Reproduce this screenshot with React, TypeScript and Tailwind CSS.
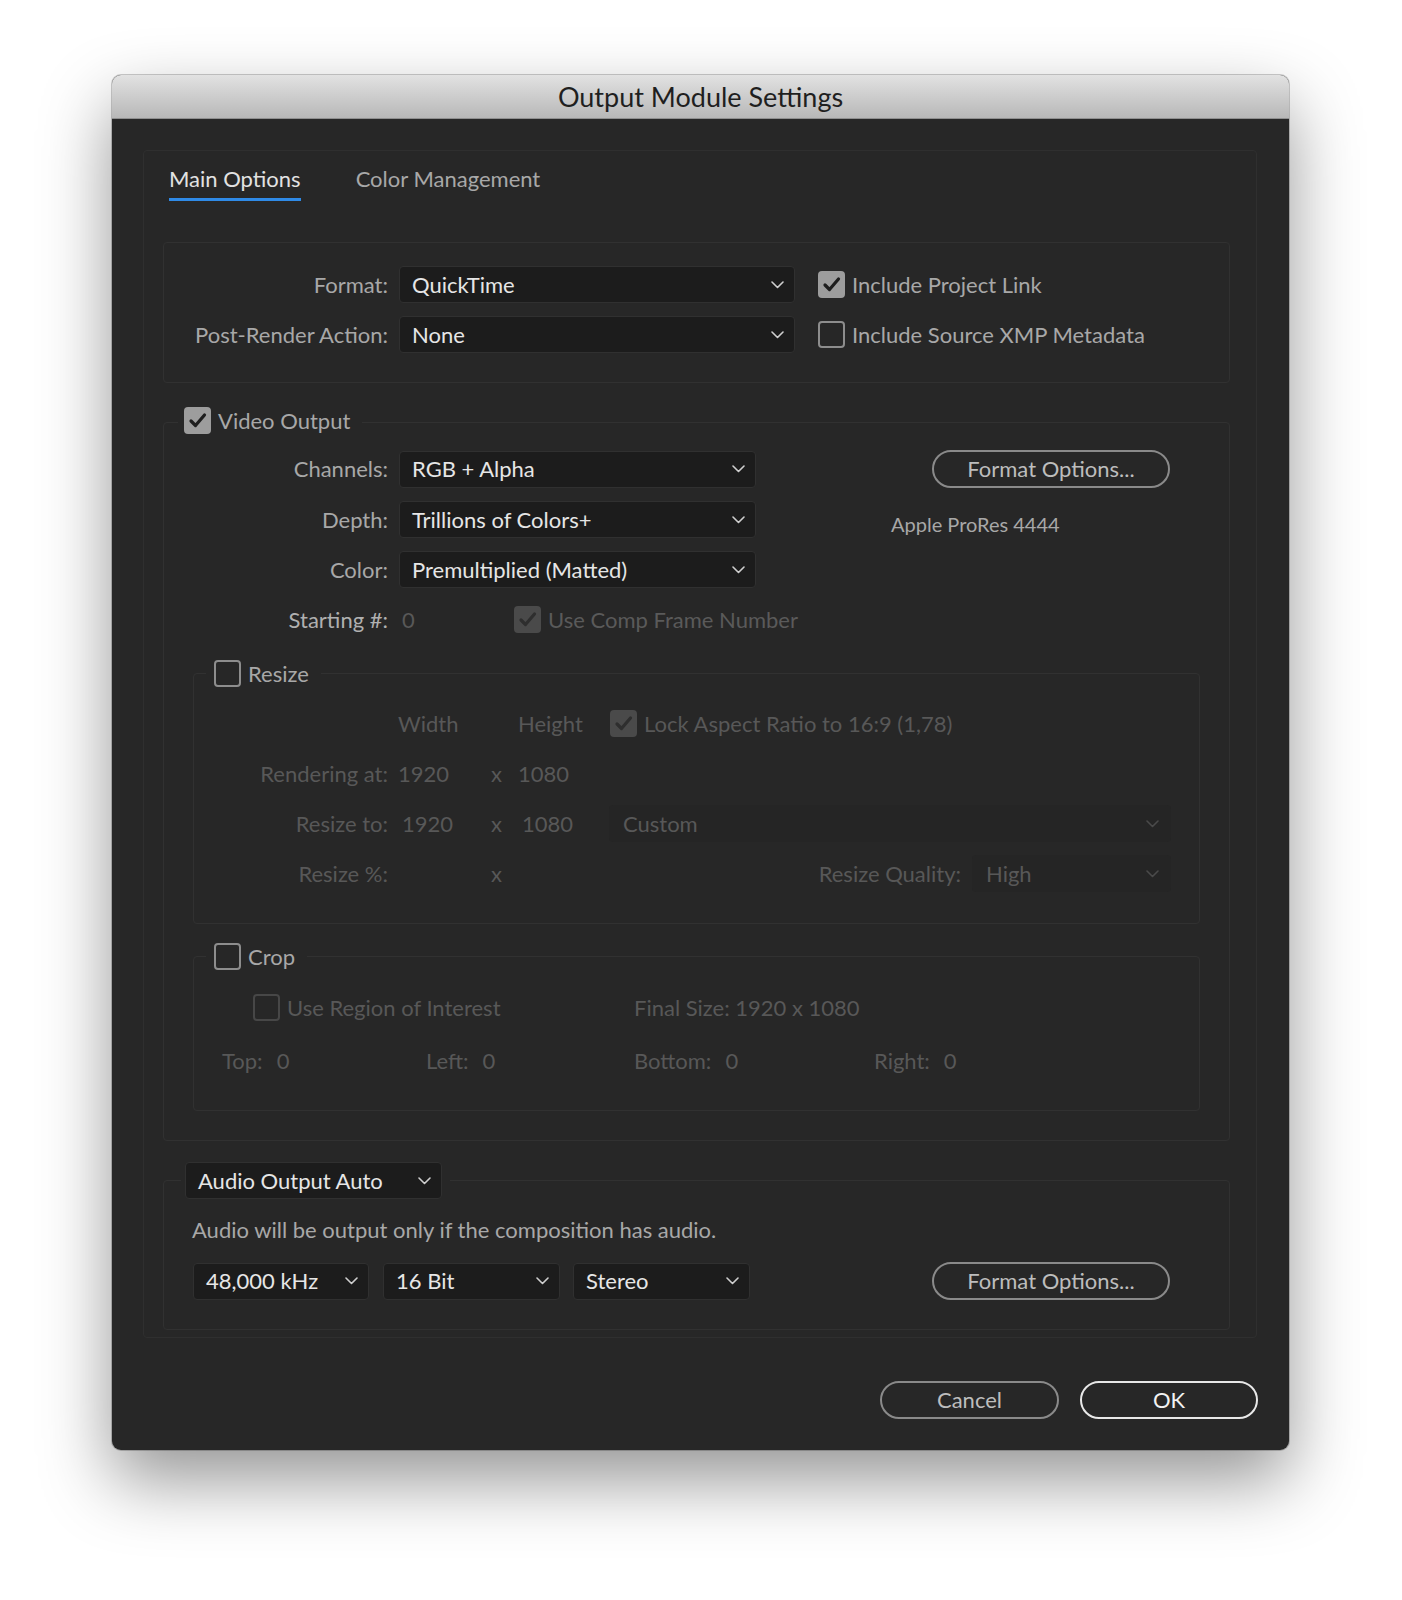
import React from "react";

const Chevron = ({ color = "#cfcfcf" }: { color?: string }) => (
  <svg width="13" height="8" viewBox="0 0 13 8" className="shrink-0">
    <path d="M1 1l5.5 5.5L12 1" fill="none" stroke={color} strokeWidth="1.6" strokeLinecap="round" strokeLinejoin="round" />
  </svg>
);

const Check = ({ color }: { color: string }) => (
  <svg width="27" height="27" viewBox="0 0 27 27">
    <path d="M7 14l4.5 4.5L20.5 8" fill="none" stroke={color} strokeWidth="3.2" strokeLinecap="round" strokeLinejoin="round" />
  </svg>
);

function Checkbox({ checked, disabled }: { checked?: boolean; disabled?: boolean }) {
  if (checked && !disabled)
    return (
      <div className="w-[27px] h-[27px] shrink-0 rounded-[4px] bg-[#9d9d9d] flex items-center justify-center">
        <Check color="#1e1e1e" />
      </div>
    );
  if (checked && disabled)
    return (
      <div className="w-[27px] h-[27px] shrink-0 rounded-[4px] bg-[#4a4a4a] flex items-center justify-center">
        <Check color="#2e2e2e" />
      </div>
    );
  if (disabled)
    return <div className="w-[27px] h-[27px] shrink-0 rounded-[4px] border-2 border-[#474747]" />;
  return <div className="w-[27px] h-[27px] shrink-0 rounded-[4px] border-2 border-[#8d8d8d]" />;
}

function Select({ value, w }: { value: string; w: string }) {
  return (
    <div className={`${w} h-[37px] shrink-0 rounded-[4px] bg-[#1c1c1c] border border-[#303030] flex items-center justify-between pl-[12px] pr-[10px] text-[#e6e6e6]`}>
      <span>{value}</span>
      <Chevron />
    </div>
  );
}

function DisabledSelect({ value, w }: { value: string; w: string }) {
  return (
    <div className={`${w} h-[37px] shrink-0 rounded-[4px] bg-[#252525] flex items-center justify-between pl-[14px] pr-[12px] text-[#585858]`}>
      <span>{value}</span>
      <Chevron color="#4a4a4a" />
    </div>
  );
}

function PillButton({ label, w, bright }: { label: string; w: string; bright?: boolean }) {
  return (
    <div
      className={`${w} h-[38px] shrink-0 rounded-full border-2 flex items-center justify-center ${
        bright ? "border-[#e8e8e8] text-[#f2f2f2]" : "border-[#8a8a8a] text-[#bdbdbd]"
      }`}
    >
      {label}
    </div>
  );
}

function VRow({ label, children }: { label: string; children: React.ReactNode }) {
  return (
    <div className="flex items-center h-[37px]">
      <div className="w-[224px] text-right text-[#a8a8a8] shrink-0">{label}</div>
      <div className="ml-[11px] flex items-center">{children}</div>
    </div>
  );
}

export default function App() {
  return (
    <div className="w-[1402px] h-[1600px] bg-white pt-[75px] pl-[112px] font-[Lato,sans-serif] text-[22px] leading-[28px]">
      <div className="w-[1177px] h-[1375px] rounded-[9px] bg-[#272727] shadow-[0_30px_70px_rgba(0,0,0,0.42),0_0_0_1px_rgba(0,0,0,0.2)] overflow-hidden flex flex-col">
        {/* Title bar */}
        <div className="h-[44px] shrink-0 bg-linear-to-b from-[#e2e2e2] to-[#b8b8b8] border-b border-[#8f8f8f] flex items-center justify-center text-[27px] text-[#1f1f1f]">
          Output Module Settings
        </div>

        <div className="flex-1 px-[31px] pt-[31px] flex flex-col">
          {/* Outer panel */}
          <div className="w-[1114px] h-[1188px] shrink-0 border border-[#2f2f2f] rounded-[4px] flex flex-col pl-[19px]">
            {/* Tabs */}
            <div className="flex gap-[55px] pl-[6px]">
              <div className="flex flex-col pt-[14px]">
                <span className="text-[#e2e2e2]">Main Options</span>
                <div className="mt-[5px] h-[3px] bg-[#2f8ae6]" />
              </div>
              <div className="flex flex-col pt-[14px]">
                <span className="text-[#a8a8a8]">Color Management</span>
              </div>
            </div>

            {/* Format panel */}
            <div className="mt-[41px] w-[1067px] h-[141px] shrink-0 border border-[#313131] rounded-[4px] pt-[23px] flex flex-col gap-[13px]">
              <div className="flex items-center">
                <VRow label="Format:">
                  <Select value="QuickTime" w="w-[396px]" />
                </VRow>
                <div className="ml-[23px] flex items-center gap-[7px]">
                  <Checkbox checked />
                  <span className="text-[#a8a8a8]">Include Project Link</span>
                </div>
              </div>
              <div className="flex items-center">
                <VRow label="Post-Render Action:">
                  <Select value="None" w="w-[396px]" />
                </VRow>
                <div className="ml-[23px] flex items-center gap-[7px]">
                  <Checkbox />
                  <span className="text-[#a8a8a8]">Include Source XMP Metadata</span>
                </div>
              </div>
            </div>

            {/* Video Output */}
            <fieldset className="mt-[24px] w-[1067px] shrink-0 border border-[#313131] rounded-[4px] pb-[29px]">
              <legend className="ml-[14px] pl-[6px] pr-[12px] h-[31px] flex items-start gap-[7px]">
                <Checkbox checked />
                <span className="text-[#a8a8a8]">Video Output</span>
              </legend>
              <div className="pt-[12px] flex flex-col gap-[13px]">
                <div className="flex items-center">
                  <VRow label="Channels:">
                    <Select value="RGB + Alpha" w="w-[357px]" />
                  </VRow>
                  <div className="ml-[176px]">
                    <PillButton label="Format Options..." w="w-[238px]" />
                  </div>
                </div>
                <div className="flex items-center">
                  <VRow label="Depth:">
                    <Select value="Trillions of Colors+" w="w-[357px]" />
                  </VRow>
                  <span className="ml-[135px] mt-[9px] text-[20px] text-[#a8a8a8]">Apple ProRes 4444</span>
                </div>
                <VRow label="Color:">
                  <Select value="Premultiplied (Matted)" w="w-[357px]" />
                </VRow>
                <div className="flex items-center h-[37px]">
                  <div className="w-[224px] text-right text-[#b0b0b0] shrink-0">Starting #:</div>
                  <div className="w-[126px] pl-[14px] text-[#585858] shrink-0">0</div>
                  <Checkbox checked disabled />
                  <span className="ml-[7px] text-[#5a5a5a]">Use Comp Frame Number</span>
                </div>
              </div>

              {/* Resize */}
              <fieldset className="mt-[22px] ml-[29px] w-[1007px] border border-[#313131] rounded-[4px] pb-[31px]">
                <legend className="ml-[12px] pl-[8px] pr-[12px] h-[27px] flex items-center gap-[7px]">
                  <Checkbox />
                  <span className="text-[#a8a8a8]">Resize</span>
                </legend>
                <div className="pt-[18px] flex flex-col gap-[13px] text-[#585858]">
                  <div className="flex items-center h-[37px]">
                    <div className="w-[194px] shrink-0" />
                    <div className="ml-[10px] w-[120px] shrink-0">Width</div>
                    <div className="w-[92px] shrink-0">Height</div>
                    <Checkbox checked disabled />
                    <span className="ml-[7px]">Lock Aspect Ratio to 16:9 (1,78)</span>
                  </div>
                  <div className="flex items-center h-[37px]">
                    <div className="w-[194px] text-right shrink-0">Rendering at:</div>
                    <div className="ml-[10px] w-[93px] shrink-0">1920</div>
                    <div className="w-[27px] shrink-0">x</div>
                    <div className="shrink-0">1080</div>
                  </div>
                  <div className="flex items-center h-[37px]">
                    <div className="w-[194px] text-right shrink-0">Resize to:</div>
                    <div className="ml-[10px] w-[93px] pl-[4px] shrink-0">1920</div>
                    <div className="w-[27px] shrink-0">x</div>
                    <div className="w-[91px] pl-[4px] shrink-0">1080</div>
                    <DisabledSelect value="Custom" w="w-[562px]" />
                  </div>
                  <div className="flex items-center h-[37px]">
                    <div className="w-[194px] text-right shrink-0">Resize %:</div>
                    <div className="ml-[10px] w-[93px] shrink-0" />
                    <div className="w-[27px] shrink-0">x</div>
                    <div className="flex-1 text-right">Resize Quality:</div>
                    <div className="ml-[11px] mr-[28px]">
                      <DisabledSelect value="High" w="w-[199px]" />
                    </div>
                  </div>
                </div>
              </fieldset>

              {/* Crop */}
              <fieldset className="mt-[19px] ml-[29px] w-[1007px] border border-[#313131] rounded-[4px] pb-[31px]">
                <legend className="ml-[12px] pl-[8px] pr-[12px] h-[27px] flex items-center gap-[7px]">
                  <Checkbox />
                  <span className="text-[#a8a8a8]">Crop</span>
                </legend>
                <div className="pt-[19px] flex flex-col gap-[16px] text-[#585858]">
                  <div className="flex items-center h-[37px] pl-[59px]">
                    <div className="w-[381px] shrink-0 flex items-center gap-[7px]">
                      <Checkbox disabled />
                      <span>Use Region of Interest</span>
                    </div>
                    <span>Final Size: 1920 x 1080</span>
                  </div>
                  <div className="flex items-center h-[37px] pl-[28px]">
                    <div className="w-[204px] shrink-0 flex gap-[14px]"><span>Top:</span><span>0</span></div>
                    <div className="w-[208px] shrink-0 flex gap-[14px]"><span>Left:</span><span>0</span></div>
                    <div className="w-[240px] shrink-0 flex gap-[14px]"><span>Bottom:</span><span>0</span></div>
                    <div className="flex gap-[14px]"><span>Right:</span><span>0</span></div>
                  </div>
                </div>
              </fieldset>
            </fieldset>

            {/* Audio */}
            <fieldset className="mt-[21px] w-[1067px] shrink-0 border border-[#313131] rounded-[4px] pb-[29px]">
              <legend className="ml-[17px] pl-[4px] pr-[8px]">
                <Select value="Audio Output Auto" w="w-[257px]" />
              </legend>
              <div className="mt-[16px] pl-[28px] h-[30px] flex items-center text-[#a8a8a8]">
                Audio will be output only if the composition has audio.
              </div>
              <div className="mt-[17px] pl-[29px] flex items-center">
                <Select value="48,000 kHz" w="w-[176px]" />
                <div className="ml-[14px]"><Select value="16 Bit" w="w-[177px]" /></div>
                <div className="ml-[13px]"><Select value="Stereo" w="w-[177px]" /></div>
                <div className="ml-[182px]">
                  <PillButton label="Format Options..." w="w-[238px]" />
                </div>
              </div>
            </fieldset>
          </div>

          {/* Buttons */}
          <div className="mt-[43px] flex justify-end gap-[21px]">
            <PillButton label="Cancel" w="w-[179px]" />
            <PillButton label="OK" w="w-[178px]" bright />
          </div>
        </div>
      </div>
    </div>
  );
}
